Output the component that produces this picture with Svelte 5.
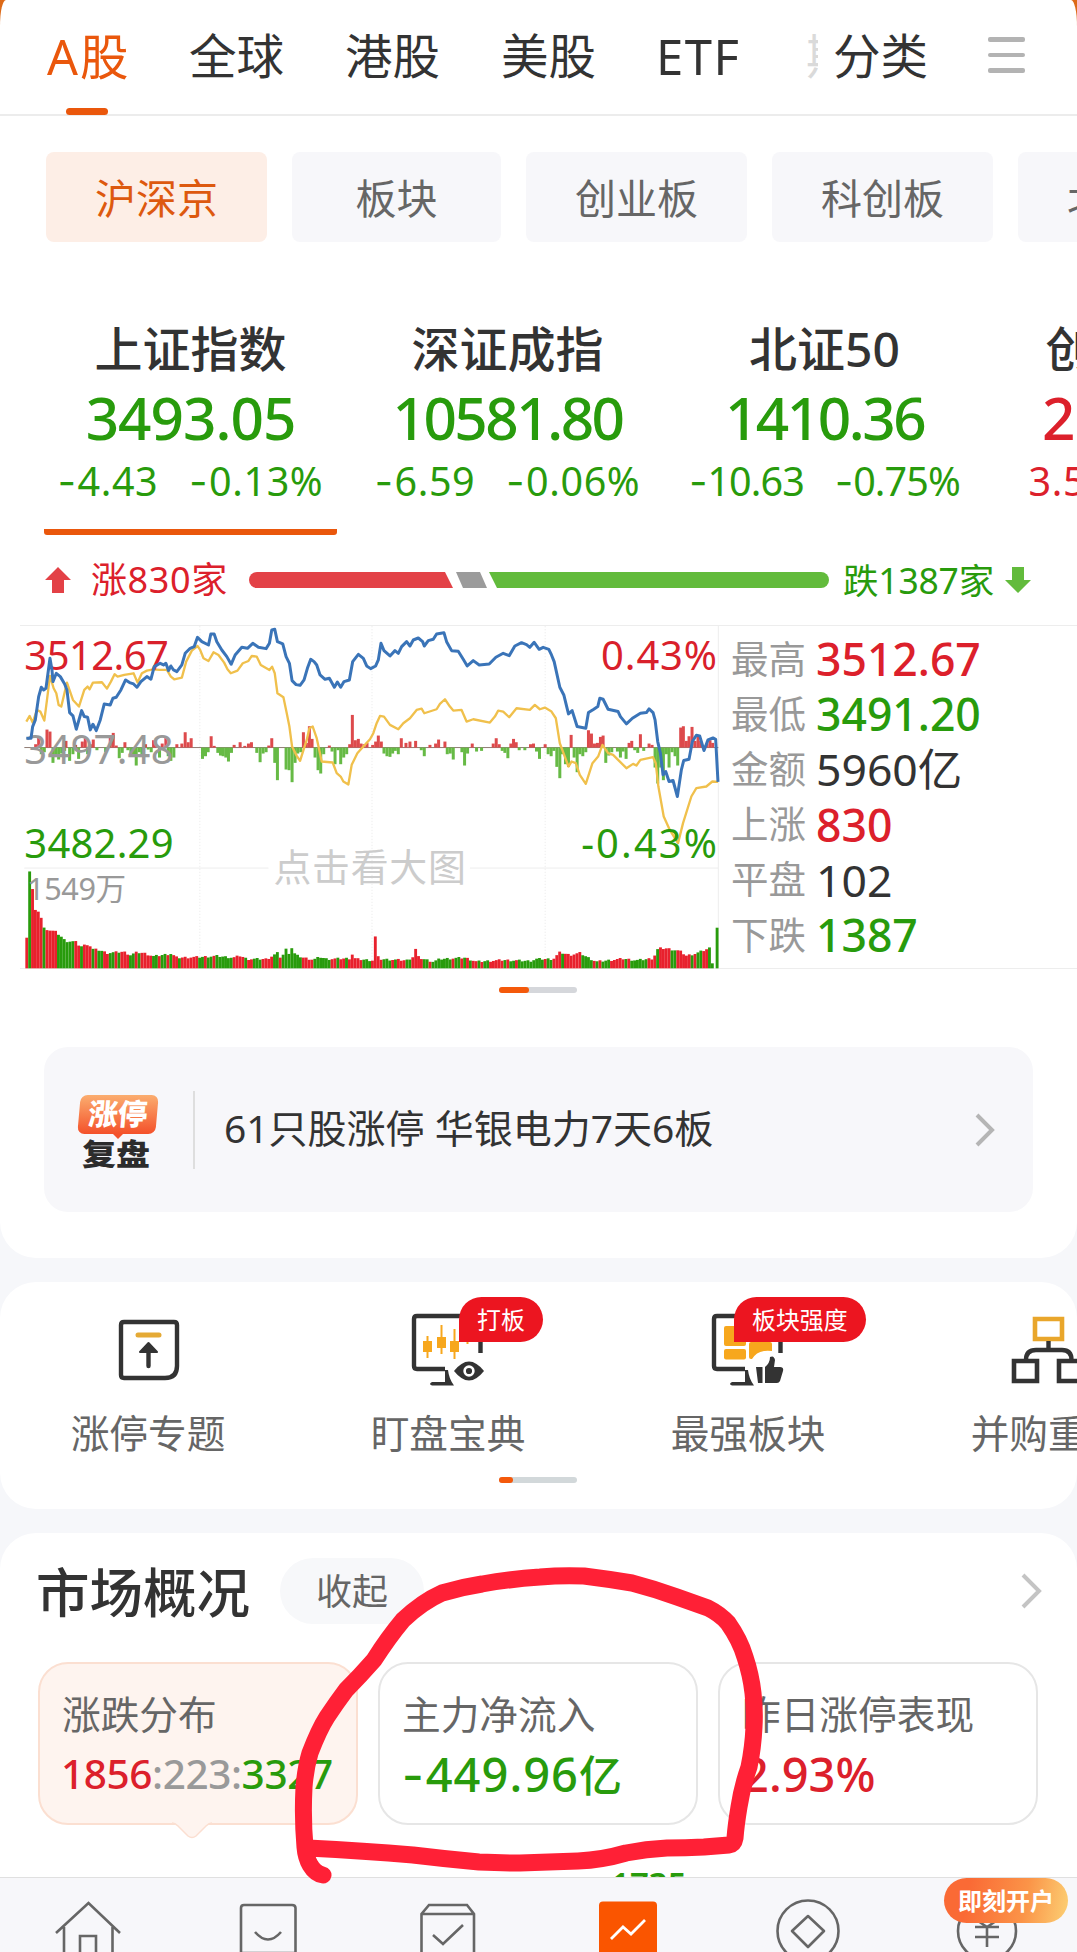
<script>
  const tabs = ['A股', '全球', '港股', '美股', 'ETF'];
  const chips = ['沪深京', '板块', '创业板', '科创板', '北交所'];

  const indices = [
    { name: '上证指数', value: '3493.05', diff: '-4.43', pct: '-0.13%', up: false },
    { name: '深证成指', value: '10581.80', diff: '-6.59', pct: '-0.06%', up: false },
    { name: '北证50', value: '1410.36', diff: '-10.63', pct: '-0.75%', up: false },
    { name: '创业板指', value: '2172.35', diff: '3.58', pct: '0.17%', up: true }
  ];

  const stats = [
    { label: '最高', value: '3512.67', tone: 'red' },
    { label: '最低', value: '3491.20', tone: 'green' },
    { label: '金额', value: '5960亿', tone: 'dark' },
    { label: '上涨', value: '830', tone: 'red' },
    { label: '平盘', value: '102', tone: 'dark' },
    { label: '下跌', value: '1387', tone: 'green' }
  ];

  // Intraday price line, in chart units (three per pixel).
  const price =
    '78,385 92,385 97,350 105,330 115,260 123,232 130,240 137,235 143,190 149,145 155,180 158,215 168,190 180,200 193,222 200,240 208,308 218,318 228,358 244,302 252,320 262,322 270,360 278,343 288,362 300,330 312,282 330,285 338,265 348,262 362,240 376,210 388,218 400,222 410,232 422,215 440,200 452,208 462,170 480,160 490,165 497,160 505,182 512,168 520,180 530,185 545,165 555,130 570,115 582,110 592,82 605,95 625,105 632,72 642,72 650,95 665,120 680,140 693,163 705,135 725,112 742,115 758,100 775,112 798,116 808,100 815,60 824,58 832,95 848,102 858,140 868,160 876,212 888,224 900,226 912,210 922,175 932,148 942,155 950,165 960,195 975,208 988,205 1003,232 1012,216 1022,232 1032,215 1048,210 1058,155 1075,133 1090,145 1100,168 1112,176 1127,168 1135,150 1143,100 1152,122 1170,138 1185,122 1195,130 1205,110 1220,95 1230,108 1240,90 1255,84 1268,95 1273,108 1285,92 1300,88 1310,72 1332,68 1340,95 1355,122 1375,124 1390,148 1402,168 1420,152 1438,165 1468,162 1488,142 1510,130 1528,137 1545,108 1565,98 1580,104 1590,112 1603,97 1618,118 1630,112 1647,118 1655,135 1663,155 1680,232 1692,255 1706,312 1717,302 1732,350 1758,355 1766,308 1782,298 1794,290 1800,265 1810,268 1825,298 1855,305 1862,320 1880,342 1898,325 1922,310 1940,308 1948,297 1960,308 1966,330 1974,395 1982,430 1990,495 1998,485 2008,515 2020,512 2033,560 2045,480 2052,452 2068,448 2078,395 2090,376 2100,378 2113,422 2125,390 2140,384 2148,388 2155,516';

  // Average line.
  const average =
    '78,335 88,318 97,338 110,300 120,305 132,332 140,270 149,198 160,235 168,250 175,285 183,290 200,218 218,270 236,290 252,240 262,230 268,238 278,218 305,217 320,236 332,215 343,193 352,200 372,195 400,190 412,218 425,190 440,182 460,178 478,180 500,180 512,200 522,208 545,203 558,155 575,122 592,108 600,120 610,145 625,153 640,127 655,135 672,158 682,178 692,190 712,182 728,160 745,153 755,138 770,140 782,165 808,180 816,170 824,190 832,250 850,262 860,310 868,350 876,410 890,438 900,453 912,415 920,390 928,355 938,350 950,385 965,455 998,458 1010,490 1022,500 1030,515 1045,524 1055,465 1072,430 1090,410 1110,388 1120,370 1130,340 1140,318 1152,320 1170,345 1195,358 1210,340 1230,325 1250,300 1265,296 1273,310 1310,298 1320,282 1335,268 1350,290 1360,302 1385,300 1400,335 1420,328 1470,338 1485,320 1495,302 1510,305 1528,322 1550,295 1590,300 1605,285 1620,298 1635,293 1655,305 1668,325 1680,400 1706,470 1715,455 1728,460 1740,495 1758,522 1778,460 1795,440 1808,405 1825,430 1840,435 1855,450 1880,475 1900,462 1910,467 1922,450 1960,442 1968,460 1976,530 1992,620 2010,660 2035,700 2050,640 2075,560 2090,535 2120,530 2138,515 2155,516';

  // Momentum bars: [x, height], negative heights hang below the axis.
  const momentum = [
    [106, 10], [115, 30], [123, -20], [132, -14], [140, 54], [149, 48], [158, -46], [166, -22], [175, -36], [184, -18], [193, -10],
    [197, 20], [208, -40], [218, -20], [226, 8], [235, -34], [246, 18], [255, 30], [262, -20], [270, 10], [279, 24], [290, -8], [316, -14], [330, 30], [339, 44], [348, 6],
    [357, -32], [366, -16], [374, 16], [383, -8], [392, -18], [400, -20], [408, -54], [417, -14], [425, -26], [436, 10], [444, -6], [453, -14], [460, 22], [468, 6], [478, -30],
    [486, 12], [497, 30], [504, -26], [512, -40], [521, -30], [530, 10], [545, 12], [555, 46], [564, 16], [573, 28], [607, -34], [616, -26],
    [624, -14], [633, 34], [642, 5], [653, -16], [661, -24], [669, -26], [677, -30], [685, -42], [694, -16], [702, 8], [720, 16], [734, 5], [745, 12], [754, 16], [770, -16], [780, -44], [789, -18],
    [798, -14], [806, 6], [815, 28], [824, -46], [832, -98], [858, -66], [867, -68], [876, -104], [885, -46], [893, -18], [902, -14],
    [910, 46], [919, 14], [928, 64], [936, 26], [945, -30], [954, -68], [962, -78], [971, -20], [988, 6], [996, -12], [1005, -50], [1014, -8],
    [1022, -50], [1031, -30], [1040, -20], [1049, 10], [1057, 98], [1066, 22], [1075, 26], [1083, 12], [1092, 10], [1101, 14], [1118, 8], [1127, 18], [1135, 36], [1144, 18],
    [1152, -18], [1161, -26], [1170, -28], [1178, -18], [1186, -10], [1195, -20], [1204, 28], [1218, 14], [1230, 18], [1247, 20], [1264, -8], [1273, -26], [1290, 8], [1307, 12], [1316, 24], [1335, 18],
    [1342, -20], [1351, -18], [1360, -36], [1386, -14], [1394, -54], [1403, -18], [1417, 12], [1430, -12], [1445, -10], [1480, 12], [1489, 28], [1498, 10], [1507, -10], [1515, -16], [1524, -32], [1533, 12], [1541, 26], [1549, 16],
    [1558, -8], [1575, -8], [1592, 10], [1601, 12], [1610, -12], [1619, -34], [1636, 10], [1645, -20], [1654, -26], [1662, -10], [1671, -58], [1680, -92], [1688, -20], [1697, -50], [1706, -58], [1714, 38], [1723, -30], [1732, -74],
    [1740, -20], [1749, -26], [1758, -14], [1766, 52], [1775, 42], [1784, 12], [1793, 14], [1802, 32], [1810, 36], [1818, -46], [1827, -24], [1836, -14], [1853, -12], [1862, -30], [1870, -12], [1879, -34], [1888, 14], [1896, 20], [1905, -8], [1914, -16], [1922, 40], [1932, -10], [1948, 12], [1957, 8],
    [1966, -60], [1974, -108], [1983, -60], [1991, -98], [2000, -20], [2008, -60], [2017, -14], [2026, -26], [2034, -54], [2043, 60], [2051, 64], [2060, 20], [2068, 34], [2077, 62], [2086, 20], [2095, 36], [2103, 20], [2113, -6], [2122, 12], [2131, 22], [2139, 14]
  ];

  // Volume profile key points: [x, height].
  const volumeKeys = [
    [79, 92], [88, 299], [97, 233], [105, 175], [114, 170], [123, 150], [131, 122], [145, 115], [165, 110], [180, 98], [195, 82], [225, 80],
    [240, 65], [265, 74], [275, 58], [300, 54], [320, 46], [370, 50], [390, 40], [410, 48], [430, 46], [460, 36], [512, 44], [530, 32], [600, 34],
    [650, 37], [700, 32], [720, 38], [740, 28], [800, 28], [832, 46], [843, 30], [858, 58], [867, 45], [876, 64], [885, 40], [910, 32], [940, 26],
    [960, 34], [980, 28], [1048, 30], [1057, 43], [1066, 28], [1118, 24], [1126, 98], [1135, 28], [1220, 24], [1238, 34], [1247, 58], [1256, 32],
    [1300, 20], [1320, 28], [1395, 32], [1430, 20], [1510, 25], [1590, 22], [1610, 28], [1660, 28], [1680, 48], [1710, 40], [1740, 46], [1765, 32],
    [1790, 20], [1870, 29], [1910, 24], [1960, 30], [1975, 60], [2000, 60], [2040, 52], [2060, 38], [2090, 45], [2132, 62], [2139, 8], [2145, 5]
  ];
  const level = (x) => {
    for (let i = 1; i < volumeKeys.length; i++) {
      const [x0, h0] = volumeKeys[i - 1];
      const [x1, h1] = volumeKeys[i];
      if (x <= x1) return h0 + ((h1 - h0) * Math.max(0, x - x0)) / (x1 - x0);
    }
    return 5;
  };
  const colours =
    'rgrrrrgrrrrggggggrrgrrrgrggrrggrgrrrggrgrrrrggrggrgrrgrrrrrrggrggrggggggrrrrgrrgggrrrrggrgggggggrrrrggggggrrgrrgrrrrrgggr' +
    'rrrgggrgrrrggrrrrggrgggggggrggrgrgrrgrggrrrrrgrggrgggggggggrggrrrgrrrrrrggggrgrgggrrrrrgrggggggrrrgrrrrggrrrrrgrggrrgggrrg';
  const volume = Array.from({ length: 239 }, (_, i) => {
    const x = 79 + i * 8.65;
    const jitter = i > 6 ? ((i * 37) % 7) - 3 : 0;
    return { x, h: Math.max(5, level(x) + jitter), c: colours[i % colours.length] };
  });
  volume.push({ x: 2152, h: 122, c: 'g' });
</script>

{#snippet signed(text)}{#if text[0] === '-'}<span class="minus">-</span>{text.slice(1)}{:else}{text}{/if}{/snippet}

<div class="screen">
  <section class="panel main">
    <nav class="tabs">
      {#each tabs as t, i}
        <span class="tab t{i}" class:on={i === 0}>{t}</span>
      {/each}
      <span class="sliver">期</span>
      <span class="tab cat">分类</span>
      <span class="menu"><i></i><i></i><i></i></span>
    </nav>

    <div class="chips">
      {#each chips as c, i}
        <span class="chip" class:sel={i === 0} class:short={c.length === 2}>{c}</span>
      {/each}
    </div>

    <div class="indices">
      {#each indices as q, i}
        <div class="index" class:up={q.up} class:current={i === 0}>
          <div class="name">{q.name}</div>
          <div class="value" class:dense={q.value.includes('1')}>{q.value}</div>
          <div class="delta" class:tight={q.diff.length > 5}><span>{@render signed(q.diff)}</span><span>{@render signed(q.pct)}</span></div>
        </div>
      {/each}
    </div>

    <div class="breadth">
      <svg class="arrow" viewBox="0 0 26 26"><path d="M13 0 26 13H19V26H7V13H0Z" fill="#e34146" /></svg>
      <span class="rise">涨830家</span>
      <svg class="ratio" viewBox="0 0 580 16">
        <path d="M8 0H196L204 16H8A8 8 0 0 1 8 0Z" fill="#e34247" />
        <path d="M207 0H231L238 16H214Z" fill="#9b9b9b" />
        <path d="M240 0H572A8 8 0 0 1 572 16H248Z" fill="#62bb3c" />
      </svg>
      <span class="fall">跌1387家</span>
      <svg class="arrow" viewBox="0 0 26 26"><path d="M13 26 26 13H19V0H7V13H0Z" fill="#62bb3c" /></svg>
    </div>

    <div class="quote">
      <svg class="chart" viewBox="60 48 2106 1030">
        <g stroke="#ededed" stroke-width="3" fill="none">
          <path d="M72 775H805M1410 775H2156M2156 48V1078" />
          <path d="M599 48V1078M1116 48V1078M1636 48V1078" stroke-dasharray="4 5" />
        </g>
        {#each volume as v}
          <rect x={v.x - 4} y={1076 - v.h} width="8.6" height={v.h} fill={v.c === 'r' ? '#e8212d' : '#289b0c'} />
        {/each}
        <path d="M72 413H2156" stroke="#8e7a72" stroke-width="3" />
        {#each momentum as [x, h]}
          <rect x={x - 4.5} y={h > 0 ? 413 - h : 413} width="9" height={Math.abs(h)} fill={h > 0 ? '#dd4a4c' : '#66ba45'} />
        {/each}
        <polyline points={average} fill="none" stroke="#f0c04c" stroke-width="7" stroke-linejoin="round" />
        <g class="chart-text">
          <text x="72" y="181" textLength="434" fill="#d9202b">3512.67</text>
          <text x="72" y="463" textLength="448" fill="#999">3497.48</text>
          <text x="72" y="744" textLength="448" fill="#289b0c">3482.29</text>
          <text x="1804" y="181" textLength="348" fill="#d9202b">0.43%</text>
          <text x="1744" y="744" textLength="408" fill="#289b0c">-0.43%</text>
          <text x="80" y="872" class="vol" textLength="298" fill="#999">1549万</text>
          <text x="820" y="815" class="hint" textLength="578">点击看大图</text>
        </g>
        <polyline points={price} fill="none" stroke="#3a74b8" stroke-width="9" stroke-linejoin="round" />
      </svg>
      <dl class="stats">
        {#each stats as s}
          <div><dt>{s.label}</dt><dd class={s.tone}>{s.value}</dd></div>
        {/each}
      </dl>
    </div>

    <div class="pager"><i></i></div>

    <div class="review">
      <div class="logo">
        <span class="logo-top">涨停</span>
        <svg class="logo-tip" viewBox="0 0 10 5"><path d="M0 0H10L5 5Z" fill="#f4512a" /></svg>
        <span class="logo-bottom">复盘</span>
      </div>
      <span class="rule"></span>
      <span class="headline">61只股涨停 华银电力7天6板</span>
      <svg class="chev" viewBox="0 0 20 34"><path d="M2 2 17 17 2 32" /></svg>
    </div>
  </section>

  <section class="panel tools">
    <div class="tool-row">
      <div class="tool">
        <svg class="first" viewBox="0 0 80 80">
          <path d="M16 12H66Q69 12 69 15V56Q69 68 57 68H16Q13 68 13 65V15Q13 12 16 12Z" fill="none" stroke="#333" stroke-width="4.4" stroke-linejoin="round" />
          <path d="M30 25H51" stroke="#e5aa35" stroke-width="5" stroke-linecap="round" />
          <path d="M40.5 56V36" stroke="#333" stroke-width="4.4" stroke-linecap="round" />
          <path d="M40.5 33 49 42H32Z" fill="#333" stroke="#333" stroke-width="2" stroke-linejoin="round" />
        </svg>
        <span>涨停专题</span>
      </div>
      <div class="tool">
        <svg viewBox="0 0 80 80">
          <path d="M37 59H9Q6 59 6 56V9Q6 6 9 6H69.5Q72.5 6 72.5 9V43" fill="none" stroke="#333" stroke-width="4.4" />
          <path d="M24 72H37V60H40Q41 69 46 75.5H24Q20 74 24 72Z" fill="#333" />
          <g fill="#f7a71d"><path d="M15 31H24V42H15ZM29 27H38V38H29ZM42 31H51V42H42ZM55 24H64V32H55Z" /><path d="M18.5 26h2v22h-2zM32.5 15h2v29h-2zM45.5 19h2v30h-2zM58.5 30h2v4h-2z" /></g>
          <path d="M46 61Q61 42 76 61Q61 80 46 61Z" fill="#333" /><circle cx="61" cy="61" r="4.4" fill="none" stroke="#fff" stroke-width="2.6" />
        </svg>
        <b class="badge">打板</b>
        <span>盯盘宝典</span>
      </div>
      <div class="tool">
        <svg viewBox="0 0 80 80">
          <path d="M37 59H9Q6 59 6 56V9Q6 6 9 6H69.5Q72.5 6 72.5 9V43" fill="none" stroke="#333" stroke-width="4.4" />
          <path d="M24 72H37V60H40Q41 69 46 75.5H24Q20 74 24 72Z" fill="#333" />
          <rect x="16" y="16" width="22" height="20" rx="2" fill="#f7a71d" />
          <rect x="16" y="39" width="22" height="10.5" rx="2" fill="#f7a71d" />
          <path d="M43 32H62Q64 32 64 34V41Q50 39 44 49H43Q41 49 41 47V34Q41 32 43 32Z" fill="#f7a71d" />
          <path d="M48 57H54.5V73H50ZM57 57Q62 53 62 47Q66 45 67 50L66 57H72Q76 57 75 61L72 71Q71 73 69 73H57Z" fill="#333" />
        </svg>
        <b class="badge wide">板块强度</b>
        <span>最强板块</span>
      </div>
      <div class="tool">
        <svg viewBox="0 0 80 80">
          <path d="M27 9H54V29H27Z" fill="none" stroke="#e9a62b" stroke-width="4.6" />
          <path d="M40.5 31V40M18 50Q18 40 28 40H54Q63.5 40 63.5 50" fill="none" stroke="#333" stroke-width="4.4" />
          <path d="M6 51H29V71H6ZM51 51H74V71H51Z" fill="none" stroke="#333" stroke-width="4.6" />
        </svg>
        <span>并购重组</span>
      </div>
    </div>
    <div class="pager short"><i></i></div>
  </section>

  <section class="panel market">
    <header>
      <h2>市场概况</h2>
      <span class="fold">收起</span>
      <svg class="chev" viewBox="0 0 22 36"><path d="M2 2 18 18 2 34" /></svg>
    </header>
    <div class="cards">
      <div class="card active">
        <span class="label">涨跌分布</span>
        <span class="num split"><em class="red">1856</em><em class="mute">:223:</em><em class="green">3327</em></span>
        <svg class="tail" viewBox="0 0 40 17"><path d="M0 1Q3 1 6 4L16 14Q20 17 24 14L34 4Q37 1 40 1V0H0Z" fill="#fef4ef" /><path d="M0 1Q3 1 6 4L16 14Q20 17 24 14L34 4Q37 1 40 1" fill="none" stroke="#fbdfd1" stroke-width="1.5" /></svg>
      </div>
      <div class="card">
        <span class="label">主力净流入</span>
        <span class="num flow green">{@render signed('-449.96')}<small>亿</small></span>
      </div>
      <div class="card">
        <span class="label">昨日涨停表现</span>
        <span class="num red">2.93%</span>
      </div>
    </div>
    <div class="peek"><span>1735</span></div>
  </section>

  <nav class="dock">
    <svg viewBox="0 0 1077 75">
      <g fill="none" stroke="#666" stroke-width="2.6">
        <path d="M56 56 88.5 26 120 56M64 50V80M112.5 50V80M80 80V59H96V80" />
        <path d="M244 28H292Q295.5 28 295.5 31V76H241V31Q241 28 244 28ZM255 55Q268 70 281 55" />
        <path d="M421.5 80V37L429 28H467L474 37V80M421.5 37H474M433 58 443 67 463 48" />
        <circle cx="808" cy="54" r="30.5" /><path d="M808 39 824 54 808 70 792 54Z" stroke-linejoin="round" />
        <circle cx="987" cy="54" r="29" /><path d="M975 42 987 50 999 42M975 50H999M975 60H999M987 50V70" />
      </g>
      <rect x="599" y="24.5" width="58" height="60" rx="4" fill="#fa5500" />
      <path d="M611 62 623 50 631 57 645 43" fill="none" stroke="#fff" stroke-width="2.8" />
    </svg>
    <b class="promo">即刻开户</b>
  </nav>

  <svg class="ink" viewBox="0 0 1077 1952">
    <path d="M323 1875C312 1873 306 1860 305 1847C303 1825 303 1807 304 1787C305 1775 307 1763 310 1753C315 1740 320 1728 327 1717Q337 1702 346 1690Q360 1676 374 1660Q388 1638 403 1620Q422 1602 442 1593Q462 1587 482 1584Q510 1579 540 1577Q562 1575 584 1576Q608 1579 632 1583Q655 1589 677 1597Q694 1603 708 1608Q720 1614 728 1623Q740 1640 745 1657Q751 1675 753 1693Q755 1710 754 1727Q753 1748 749 1767Q742 1787 739 1807Q736 1825 735 1838Q734 1844 729 1845L704 1847Q685 1848 667 1848Q646 1849 626 1853Q602 1860 578 1861Q550 1862 520 1863Q500 1863 479 1862Q446 1859 413 1855Q365 1851 308 1848" />
  </svg>
</div>

<style>
  :global(body) { background: #f6f7fa; }
  .screen {
    position: relative;
    display: flex;
    flex-direction: column;
    gap: 24px;
    width: 1077px;
    height: 1952px;
    overflow: hidden;
    background: linear-gradient(#dd6a18 40px, #f6f7fa 40px);
    color: #333;
    font-family: 'Noto Sans', 'Noto Sans CJK SC', sans-serif;
    white-space: nowrap;
  }
  .panel { background: #fff; border-radius: 36px; overflow: hidden; flex: none; }
  .red { color: #dc202b; }
  .green { color: #289b0c; }
  .dark { color: #333; }
  .mute { color: #999; }
  .minus { font-family: Inter, sans-serif; margin-right: 1px; }

  .main { height: 1258px; border-radius: 6px 6px 36px 36px / 26px 26px 36px 36px; }
  .tabs {
    display: flex;
    align-items: flex-start;
    box-sizing: border-box;
    height: 116px;
    padding-left: 46px;
    border-bottom: 2px solid #ececec;
  }
  .tab { position: relative; width: 156px; font-size: 47.5px; line-height: 112px; height: 112px; }
  .t0 { width: 143px; letter-spacing: 2px; padding-left: 1px; box-sizing: border-box; font-size: 48.5px; }
  .t3 { width: 155px; }
  .t4 { width: 150px; font-size: 49px; letter-spacing: 1.5px; }
  .on { color: #ea570c; }
  .on::after {
    content: '';
    position: absolute;
    left: 20px;
    top: 108px;
    width: 42px;
    height: 7px;
    border-radius: 4px;
    background: #ea570c;
  }
  .sliver {
    width: 12px;
    margin-right: 15px;
    overflow: hidden;
    font-size: 47.5px;
    line-height: 112px;
    color: #dadada;
  }
  .cat { width: 155px; }
  .menu { display: flex; flex-direction: column; gap: 11px; margin-top: 37px; }
  .menu i { width: 37px; height: 4.5px; border-radius: 2px; background: #b3b3b3; }

  .chips { display: flex; gap: 25px; padding: 36px 0 0 46px; }
  .chip {
    flex: none;
    width: 221px;
    height: 90px;
    border-radius: 8px;
    background: #f7f7fa;
    color: #666;
    font-size: 41px;
    line-height: 92px;
    text-align: center;
  }
  .chip.short { width: 209px; }
  .chip.sel { background: #fdeee6; color: #dd590f; }

  .indices { display: flex; gap: 24px; padding: 80px 0 0 44px; }
  .index {
    flex: none;
    width: 293px;
    height: 213px;
    text-align: center;
    color: #289b0c;
  }
  .index.current { background: linear-gradient(#ea570c, #ea570c) bottom / 100% 6px no-repeat; border-radius: 3px; }
  .index.up { color: #dc202b; }
  .name { color: #333; font-size: 48px; line-height: 54px; font-weight: 500; }
  .value { font-size: 58.5px; line-height: 82px; font-weight: 500; letter-spacing: -1px; }
  .value.dense { letter-spacing: -2.5px; }
  .delta { display: flex; justify-content: center; gap: 31px; font-size: 39.5px; line-height: 46px; letter-spacing: 0.6px; }
  .delta.tight { letter-spacing: -0.9px; }

  .breadth { display: flex; align-items: center; height: 48px; margin-top: 21px; padding-left: 45px; }
  .arrow { width: 26px; height: 26px; flex: none; }
  .rise { width: 178px; padding-left: 20px; box-sizing: border-box; color: #dc202b; font-size: 36px; line-height: 46px; letter-spacing: 0.6px; }
  .ratio { width: 580px; height: 16px; flex: none; }
  .fall { width: 162px; padding-left: 14px; color: #289b0c; font-size: 35.5px; line-height: 46px; letter-spacing: -0.2px; }

  .quote {
    position: relative;
    display: flex;
    box-sizing: border-box;
    height: 344px;
    margin: 21px 0 0 20px;
    border-top: 1px solid #ededed;
    border-bottom: 1px solid #ededed;
  }
  .chart { width: 702px; height: 343px; flex: none; }
  .chart-text { font-size: 120px; }
  .vol { font-size: 92px; }
  .hint { font-size: 114px; fill: #ccc; }
  .stats { margin: 5px 0 0 9px; }
  .stats div { display: flex; align-items: center; height: 55.2px; }
  dt { width: 85px; font-size: 37.5px; line-height: 54px; color: #999; }
  dd { margin: 0; font-size: 44.5px; line-height: 55px; }
  dd.red, dd.green { font-weight: 500; }

  .pager { width: 78px; height: 6px; margin: 18px 0 0 499px; border-radius: 3px; background: #d5d7db; }
  .pager i { display: block; width: 30px; height: 6px; border-radius: 3px; background: #f4590b; }

  .review {
    display: flex;
    align-items: center;
    width: 989px;
    height: 165px;
    margin: 54px 0 0 44px;
    box-sizing: border-box;
    padding: 0 38px 0 35px;
    border-radius: 24px;
    background: #f7f7fa;
  }
  .logo { display: flex; flex-direction: column; width: 78px; padding-top: 5px; font-weight: 900; text-align: center; }
  .logo-top {
    height: 39px;
    border-radius: 7px;
    background: linear-gradient(#fbad6f, #f4512a);
    color: #fff;
    font-size: 29.5px;
    line-height: 38px;
    transform: skewX(-5deg);
  }
  .logo-tip { width: 10px; height: 5px; margin: 0 auto; }
  .logo-bottom {
    height: 30px;
    margin-left: -4px;
    font-size: 34px;
    line-height: 31px;
    transform: scaleY(0.88);
    color: #2c2c2c;
  }
  .rule { width: 2px; height: 78px; margin: 0 29px 0 36px; background: #dedede; }
  .headline { flex: 1; font-size: 39px; line-height: 50px; padding-bottom: 3px; }
  .chev { width: 20px; height: 34px; fill: none; stroke: #b5b5b5; stroke-width: 4; }

  .tools { height: 227px; }
  .tool-row { display: flex; margin-left: -2px; }
  .tool {
    position: relative;
    flex: none;
    display: flex;
    flex-direction: column;
    align-items: center;
    width: 300px;
    padding-top: 28px;
    font-size: 38.7px;
    color: #666;
  }
  .tool svg { width: 80px; height: 80px; }
  .tool svg.first { margin-left: -1px; }
  .tool span { margin-top: 16px; line-height: 54px; }
  .badge {
    position: absolute;
    left: 161px;
    top: 15px;
    padding: 0 18px;
    height: 45px;
    border-radius: 23px 23px 23px 0;
    background: #ec1520;
    color: #fff;
    font-size: 23.9px;
    line-height: 46px;
    font-weight: 400;
  }
  .badge.wide { left: 136px; }
  .pager.short { margin-top: 17px; background: #d2d8da; }
  .pager.short i { width: 14px; }

  .market { height: 420px; }
  header { display: flex; align-items: center; height: 66px; padding: 25px 34px 0 36px; }
  h2 { margin: 0; width: 244px; font-size: 53.5px; line-height: 66px; padding-top: 4px; font-weight: 500; }
  .fold {
    width: 144px;
    height: 66px;
    margin-right: auto;
    border-radius: 33px;
    background: #f7f8fa;
    color: #666;
    font-size: 36px;
    line-height: 68px;
    text-align: center;
  }
  header .chev { width: 22px; height: 36px; stroke: #c4c4c4; }
  .cards { display: flex; gap: 20px; padding: 38px 0 0 38px; }
  .card {
    position: relative;
    display: flex;
    flex-direction: column;
    box-sizing: border-box;
    width: 320px;
    height: 163px;
    padding: 23px 0 0 22px;
    border: 2px solid #e6e6e6;
    border-radius: 30px;
  }
  .card.active { background: #fef4ef; border-color: #fbdfd1; }
  .label { font-size: 38.7px; line-height: 54px; color: #666; }
  .num { font-size: 47px; line-height: 66px; font-weight: 500; }
  .num.flow { letter-spacing: 1px; }
  .num small { font-size: 43px; }
  .num em { font-style: normal; }
  .num.split { font-size: 40.5px; letter-spacing: -0.4px; margin-left: -1px; }
  .tail { position: absolute; left: 132px; top: 158px; width: 40px; height: 17px; }
  .peek { height: 30px; margin: 44px 0 0 611px; color: #289b0c; font-size: 33px; line-height: 30px; font-weight: 600; }

  .dock {
    position: absolute;
    left: 0;
    right: 0;
    bottom: 0;
    height: 75px;
    background: #f7f7fa;
    box-shadow: inset 0 1px 0 #e0e0e0;
  }
  .dock svg { display: block; width: 1077px; height: 75px; }
  .promo {
    position: absolute;
    left: 944px;
    top: 1px;
    width: 124px;
    height: 45px;
    border-radius: 23px;
    background: linear-gradient(100deg, #fa6a35 20%, #fb9448 65%, #fcd074);
    color: #fff;
    font-size: 24px;
    line-height: 45px;
    text-align: center;
  }
  .ink { position: absolute; left: 0; top: 0; width: 1077px; height: 1952px; pointer-events: none; }
  .ink path { fill: none; stroke: #ff2036; stroke-width: 17; stroke-linecap: round; stroke-linejoin: round; }
</style>
